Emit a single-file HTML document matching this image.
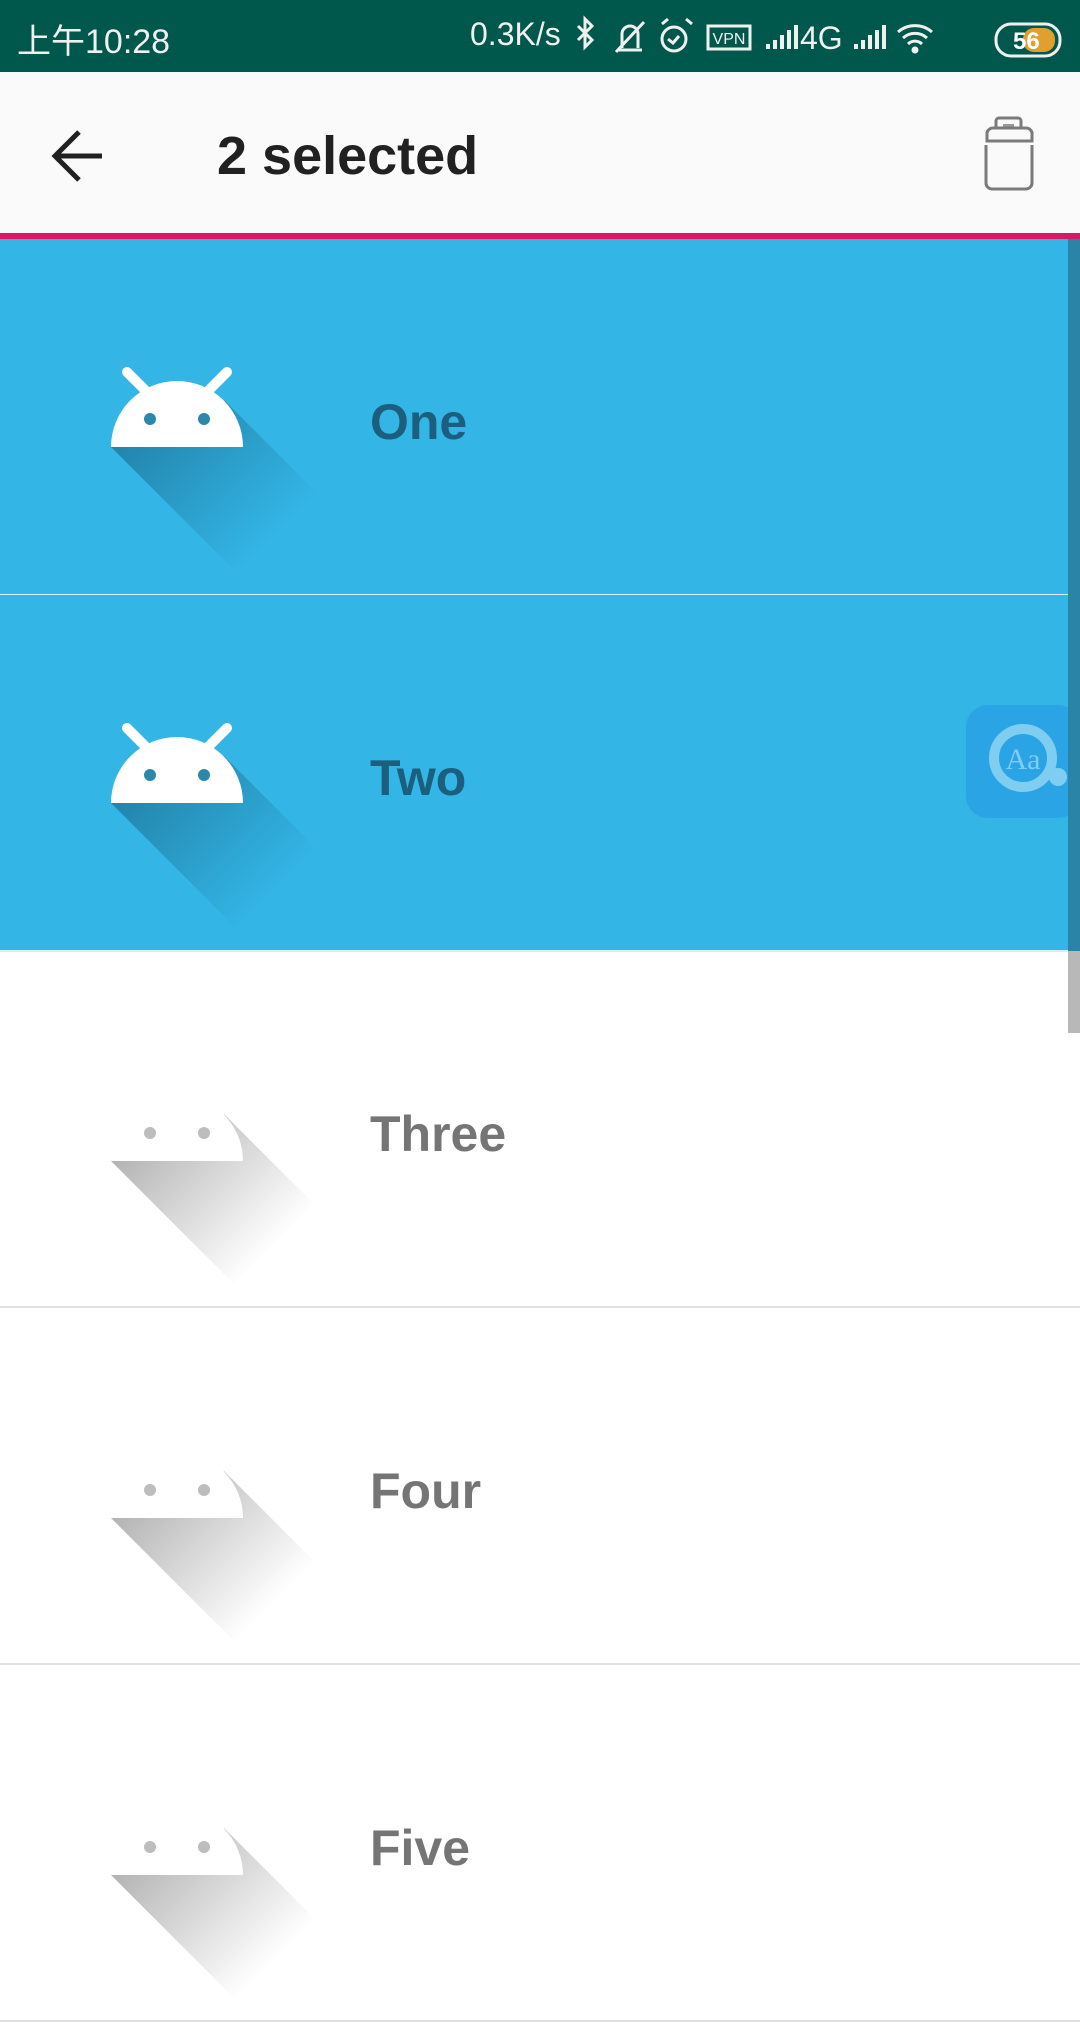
<!DOCTYPE html>
<html><head><meta charset="utf-8"><style>
*{margin:0;padding:0;box-sizing:border-box}
body{width:1080px;height:1920px;overflow:hidden;background:#fff;font-family:"Liberation Sans","Noto Sans CJK SC",sans-serif;position:relative}
.sb{position:absolute;left:0;top:0;width:1080px;height:72px;background:#00574b;color:#eef;}
.tb{position:absolute;left:0;top:72px;width:1080px;height:161px;background:#fafafa}
.pink{position:absolute;left:0;top:233px;width:1080px;height:6px;background:#d81b60}
.row{position:absolute;left:0;width:1080px;height:357px;border-bottom:2px solid #e0e0e0}
.sel{background:#33b5e5;border-bottom-color:#d8eef8}
.row svg{position:absolute;left:0;top:0}
.row .t{position:absolute;left:370px;top:158px;font-size:50px;font-weight:bold;line-height:50px;color:#757575}
.sel .t{color:#1b5e7e}
</style></head><body>
<div class="sb">
<div style="position:absolute;left:17px;top:14px;font-size:34px;color:#f0f0f0">上午10:28</div>
<div style="position:absolute;left:470px;top:16px;font-size:32px;color:#f0f0f0">0.3K/s</div>
<svg style="position:absolute;left:570px;top:0" width="500" height="72" fill="none" stroke="#f0f0f0" stroke-width="3">
<path d="M8 26 L22 40 L15 47 V19 L22 26 L8 40"/>
<path d="M48 50 h24 M52 48 V34 a8 8 0 0 1 16 0 V48 M46 52 L74 22"/>
<circle cx="104" cy="39" r="12"/><path d="M98 39 l5 4 l6 -7 M92 24 l6 -5 M116 19 l6 5"/>
<rect x="138" y="26" width="42" height="23"/><text x="159" y="44" font-size="16" fill="#f0f0f0" stroke="none" text-anchor="middle" font-family="Liberation Sans">VPN</text>
<g fill="#f0f0f0" stroke="none"><rect x="196" y="44" width="4" height="5"/><rect x="203" y="40" width="4" height="9"/><rect x="210" y="35" width="4" height="14"/><rect x="217" y="30" width="4" height="19"/><rect x="224" y="25" width="4" height="24"/>
<text x="230" y="49" font-size="32" font-family="Liberation Sans">4G</text>
<rect x="284" y="44" width="4" height="5"/><rect x="291" y="40" width="4" height="9"/><rect x="298" y="35" width="4" height="14"/><rect x="305" y="30" width="4" height="19"/><rect x="312" y="25" width="4" height="24"/></g>
<path d="M328 32 a26 26 0 0 1 34 0 M333 38 a18 18 0 0 1 24 0 M338 44 a10 10 0 0 1 14 0"/><circle cx="345" cy="50" r="2" fill="#f0f0f0"/>
<rect x="426" y="24" width="64" height="32" rx="15"/>
<rect x="453" y="28" width="32" height="24" rx="11" fill="#e0a030" stroke="none"/>
<text x="443" y="49" font-size="24" font-weight="bold" fill="#fff" stroke="none" font-family="Liberation Sans">56</text>
</svg>
</div>
<div class="tb">
<svg style="position:absolute;left:0;top:0" width="200" height="161" fill="none" stroke="#212121" stroke-width="5"><path d="M55 84 H102 M79 60 L55 84 L79 108"/></svg>
<div style="position:absolute;left:217px;top:56px;font-size:54px;font-weight:bold;color:#212121;line-height:56px">2 selected</div>
<svg style="position:absolute;left:960px;top:33px" width="100" height="100" fill="none" stroke="#7a7a7a" stroke-width="3">
<path d="M36 23 V16 a3 3 0 0 1 3 -3 H58 a3 3 0 0 1 3 3 V23"/><rect x="43" y="19" width="11" height="4" fill="#9a9a9a" stroke="none"/>
<path d="M27 36 V30 a6 6 0 0 1 6 -7 H66 a6 6 0 0 1 6 7 V36 Z"/>
<path d="M26 40 V78 a6 6 0 0 0 6 6 H66 a6 6 0 0 0 6 -6 V40"/>
</svg>
</div>
<div class="pink"></div>

<svg width="0" height="0" style="position:absolute"><defs>
<linearGradient id="gb" gradientUnits="userSpaceOnUse" x1="140" y1="180" x2="265" y2="305"><stop offset="0" stop-color="#1b6f92" stop-opacity=".7"/><stop offset="1" stop-color="#1b6f92" stop-opacity="0"/></linearGradient>
<linearGradient id="gg" gradientUnits="userSpaceOnUse" x1="140" y1="180" x2="265" y2="305"><stop offset="0" stop-color="#000" stop-opacity=".3"/><stop offset="1" stop-color="#000" stop-opacity="0"/></linearGradient>
</defs></svg>

<div class="row sel" style="top:239px">
<svg width="360" height="357"><polygon points="111,208 224,161 374,311 261,358" fill="url(#gb)"/>
<path d="M111 208 a66 66 0 0 1 132 0 Z" fill="#fff"/><path d="M127 133 l22 22 M227 133 l-22 22" stroke="#fff" stroke-width="10" stroke-linecap="round"/>
<circle cx="150" cy="180" r="6" fill="#2a88ad"/><circle cx="204" cy="180" r="6" fill="#2a88ad"/></svg>
<div class="t">One</div></div>

<div class="row sel" style="top:595px">
<svg width="360" height="357"><polygon points="111,208 224,161 374,311 261,358" fill="url(#gb)"/>
<path d="M111 208 a66 66 0 0 1 132 0 Z" fill="#fff"/><path d="M127 133 l22 22 M227 133 l-22 22" stroke="#fff" stroke-width="10" stroke-linecap="round"/>
<circle cx="150" cy="180" r="6" fill="#2a88ad"/><circle cx="204" cy="180" r="6" fill="#2a88ad"/></svg>
<div class="t">Two</div>
<div style="position:absolute;left:966px;top:110px;width:114px;height:113px;border-radius:22px;background:#2aa1e6;opacity:.85"></div>
<svg style="position:absolute;left:966px;top:110px" width="114" height="113"><circle cx="57" cy="53" r="29" fill="none" stroke="#7fcdf0" stroke-width="10"/><circle cx="92" cy="72" r="9" fill="#7fcdf0"/><text x="57" y="64" text-anchor="middle" font-size="30" fill="#7fcdf0" font-family="Liberation Serif">Aa</text></svg>
</div>

<div class="row" style="top:951px">
<svg width="360" height="357"><polygon points="111,210 224,163 374,313 261,360" fill="url(#gg)"/>
<path d="M111 210 a66 66 0 0 1 132 0 Z" fill="#fff"/>
<circle cx="150" cy="182" r="6" fill="#bdbdbd"/><circle cx="204" cy="182" r="6" fill="#bdbdbd"/></svg>
<div class="t">Three</div></div>

<div class="row" style="top:1308px">
<svg width="360" height="357"><polygon points="111,210 224,163 374,313 261,360" fill="url(#gg)"/>
<path d="M111 210 a66 66 0 0 1 132 0 Z" fill="#fff"/>
<circle cx="150" cy="182" r="6" fill="#bdbdbd"/><circle cx="204" cy="182" r="6" fill="#bdbdbd"/></svg>
<div class="t">Four</div></div>

<div class="row" style="top:1665px">
<svg width="360" height="357"><polygon points="111,210 224,163 374,313 261,360" fill="url(#gg)"/>
<path d="M111 210 a66 66 0 0 1 132 0 Z" fill="#fff"/>
<circle cx="150" cy="182" r="6" fill="#bdbdbd"/><circle cx="204" cy="182" r="6" fill="#bdbdbd"/></svg>
<div class="t">Five</div></div>

<div style="position:absolute;left:1068px;top:239px;width:12px;height:712px;background:#2a84a8"></div>
<div style="position:absolute;left:1068px;top:951px;width:12px;height:82px;background:#b8b8b8"></div>
</body></html>
